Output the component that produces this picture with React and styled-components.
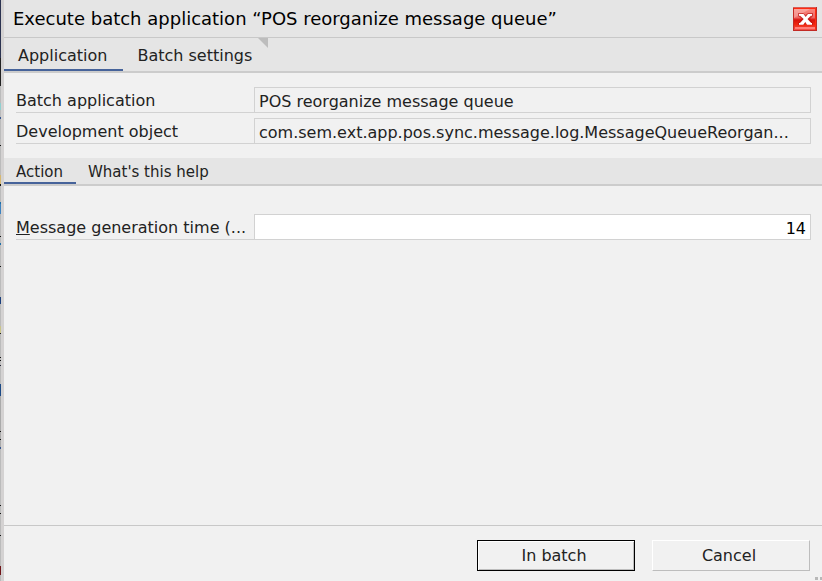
import React, { useState } from 'react';
import styled, { createGlobalStyle } from 'styled-components';

const GlobalStyle = createGlobalStyle`
  * {
    box-sizing: border-box;
  }

  body {
    margin: 0;
    background-color: #f1f1f1;
    color: #222;
    font-family: 'DejaVu Sans', Verdana, sans-serif;
    font-size: 16px;
  }

  button,
  input {
    font: inherit;
    color: inherit;
  }
`;

const Screen = styled.div`
  display: flex;
  min-height: 100vh;
`;

/* the sliver of the window behind the dialog */
const Backdrop = styled.div`
  flex: none;
  width: 1px;
  background: linear-gradient(
    #2b3350 0 58px,
    #222 58px 86px,
    #bbb 86px 103px,
    #8fd0d0 103px 110px,
    #bbb 110px 117px,
    #34558f 117px 119px,
    #bbb 119px 145px,
    #111 145px 146px,
    #bbb 146px 175px,
    #d6b871 175px 184px,
    #111 184px 186px,
    #bbb 186px 202px,
    #1f6fa8 202px 204px,
    #3f83c0 204px 214px,
    #bbb 214px 236px,
    #111 236px 237px,
    #bbb 237px 243px,
    #1f6fa8 243px 245px,
    #bbb 245px 266px,
    #111 266px 267px,
    #bbb 267px 297px,
    #1c3f7c 297px 304px,
    #bbb 304px 326px,
    #c9c48a 326px 333px,
    #222 333px 334px,
    #bbb 334px 357px,
    #111 357px 358px,
    #bbb 358px 360px,
    #111 360px 361px,
    #bbb 361px 365px,
    #223 365px 366px,
    #bbb 366px 384px,
    #1c4a86 384px 396px,
    #aaa 396px 431px,
    #111 431px 432px,
    #aaa 432px 439px,
    #111 439px 440px,
    #aaa 440px 447px,
    #34558f 447px 449px,
    #bbb 449px 505px,
    #111 505px 506px,
    #bbb 506px 513px,
    #111 513px 514px,
    #bbb 514px 535px,
    #111 535px 536px,
    #bbb 536px 566px,
    #701519 566px 575px,
    #bbb 575px
  );
`;

const Dialog = styled.main`
  position: relative;
  display: flex;
  flex: 1;
  flex-direction: column;
  min-width: 0;
  border-left: 3px solid #d4d2d2;
`;

const TitleBar = styled.header`
  display: flex;
  align-items: center;
  justify-content: space-between;
  height: 38px;
  padding: 0 4px 0 9px;
  background-color: #e5e5e5;
  border-bottom: 1px solid #c8c8c8;
`;

const Title = styled.h1`
  margin: 0;
  color: #000;
  font-size: 18px;
  font-weight: 400;
`;

const CloseButton = styled.button`
  display: block;
  width: 26px;
  height: 26px;
  padding: 0;
  background: none;
  border: 0;
  cursor: pointer;

  svg {
    display: block;
  }
`;

const TabBar = styled.div`
  display: flex;
  height: ${(props) => (props.$small ? '28px' : '35px')};
  background-color: #e5e5e5;
  border-bottom: 2px solid #ccc;
  font-size: ${(props) => (props.$small ? '15px' : '16px')};
`;

const Tab = styled.button`
  position: relative;
  padding: ${(props) => (props.$small ? '4px 13px 0 12px' : '4px 16px 0 14px')};
  background: none;
  border: 0;
  border-bottom: 2px solid
    ${(props) => (props.$active ? '#46639a' : 'transparent')};
  cursor: pointer;
`;

const Corner = styled.span`
  position: absolute;
  top: 0;
  right: 0;
  border-top: 10px solid #bdbdbd;
  border-left: 10px solid transparent;
`;

const Form = styled.div`
  display: flex;
  flex-direction: column;
  gap: 5px;
  padding: ${(props) => (props.$roomy ? '28px' : '14px')} 11px 14px 12px;
`;

const Row = styled.div`
  display: flex;
  height: 26px;
`;

const Label = styled.label`
  flex: none;
  width: 238px;
  overflow: hidden;
  border-bottom: 1px solid #d2d2d2;
  line-height: 28px;
  text-overflow: ellipsis;
  white-space: nowrap;
`;

const Field = styled.input`
  flex: 1;
  min-width: 0;
  padding: 2px 4px 0;
  background-color: ${(props) => (props.readOnly ? '#f1f1f1' : '#fff')};
  border: 1px solid #d2d2d2;
  border-radius: 0;
  outline: none;
  color: ${(props) => (props.readOnly ? '#222' : '#000')};
  text-align: ${(props) => (props.$number ? 'right' : 'left')};
  text-overflow: ellipsis;
`;

const Footer = styled.footer`
  display: flex;
  justify-content: flex-end;
  gap: 17px;
  margin-top: auto;
  padding: 14px 12px 10px;
  border-top: 1px solid #c8c8c8;
`;

const Button = styled.button`
  width: 158px;
  height: 31px;
  padding: 0 4px 0 0;
  background-color: #f1f1f1;
  border: 1px solid;
  border-color: ${(props) =>
    props.$primary ? '#000' : '#fff #bdbdbd #bdbdbd #fff'};
  box-shadow: ${(props) =>
    props.$primary ? 'inset 1px 1px #fff, inset -1px -1px #bdbdbd' : 'none'};
  cursor: pointer;
`;

const Grip = styled.span`
  position: absolute;
  right: 0;
  bottom: 1px;
  width: 7px;
  height: 3px;
  background: repeating-linear-gradient(90deg, #b8b8b8 0 3px, #f1f1f1 3px 5px);
`;

const CloseIcon = () => (
  <svg width="26" height="26" viewBox="0 0 26 26" aria-hidden="true">
    <defs>
      <linearGradient id="closeFill" x1="0" y1="0" x2="0" y2="1">
        <stop offset="0" stopColor="#f9857c" />
        <stop offset="0.4" stopColor="#ee6a66" />
        <stop offset="0.52" stopColor="#d8120c" />
        <stop offset="0.75" stopColor="#f02810" />
        <stop offset="1" stopColor="#f4524c" />
      </linearGradient>
    </defs>
    <rect x="1" y="1" width="24" height="24" fill="#c22a24" />
    <rect x="1" y="1" width="23" height="1" fill="#d95c55" />
    <rect x="2" y="2" width="22" height="22" fill="#ff2a10" />
    <rect x="2" y="3" width="21" height="21" fill="url(#closeFill)" />
    <path d="M2 3h16L2 12z" fill="#fff" opacity="0.25" />
    <path d="M3 21h20v2H3z" fill="#ff7d78" />
    <path
      d="M6 7h5l2.500 2L16 7h5v3l-3 3 3 4v2h-6l-1.500-2-1.500 2H6v-2l4-4-4-3z"
      fill="#b80d0d"
      opacity="0.6"
    />
    <path
      d="M7 8h4.500l2.200 3L16 8h4v1.800h-1.200L15.500 13l3.700 4H20v1.700h-5l-1.700-2.600-2 2.600H7V17h1l3.700-4L8.200 9.800H7z"
      fill="#fff"
    />
  </svg>
);

const App = function () {
  const [tab, setTab] = useState('application');
  const [section, setSection] = useState('action');
  const [days, setDays] = useState('14');

  return (
    <Screen>
      <GlobalStyle />
      <Backdrop />
      <Dialog>
        <TitleBar>
          <Title>Execute batch application “POS reorganize message queue”</Title>
          <CloseButton type="button" aria-label="Close">
            <CloseIcon />
          </CloseButton>
        </TitleBar>
        <TabBar role="tablist">
          <Tab
            role="tab"
            aria-selected={tab === 'application'}
            $active={tab === 'application'}
            onClick={() => setTab('application')}
          >
            Application
          </Tab>
          <Tab
            role="tab"
            aria-selected={tab === 'settings'}
            $active={tab === 'settings'}
            onClick={() => setTab('settings')}
          >
            Batch settings
            <Corner />
          </Tab>
        </TabBar>
        <Form>
          <Row>
            <Label htmlFor="batchApplication">Batch application</Label>
            <Field
              id="batchApplication"
              readOnly
              value="POS reorganize message queue"
            />
          </Row>
          <Row>
            <Label htmlFor="developmentObject">Development object</Label>
            <Field
              id="developmentObject"
              readOnly
              value="com.sem.ext.app.pos.sync.message.log.MessageQueueReorgan..."
            />
          </Row>
        </Form>
        <TabBar role="tablist" $small>
          <Tab
            role="tab"
            aria-selected={section === 'action'}
            $small
            $active={section === 'action'}
            onClick={() => setSection('action')}
          >
            Action
          </Tab>
          <Tab
            role="tab"
            aria-selected={section === 'help'}
            $small
            $active={section === 'help'}
            onClick={() => setSection('help')}
          >
            What's this help
          </Tab>
        </TabBar>
        <Form $roomy>
          <Row>
            <Label htmlFor="generationTime">
              <u>M</u>essage generation time (...
            </Label>
            <Field
              id="generationTime"
              $number
              value={days}
              onChange={(e) => setDays(e.target.value)}
            />
          </Row>
        </Form>
        <Footer>
          <Button type="button" $primary>
            In batch
          </Button>
          <Button type="button">Cancel</Button>
        </Footer>
        <Grip />
      </Dialog>
    </Screen>
  );
};

export default App;
